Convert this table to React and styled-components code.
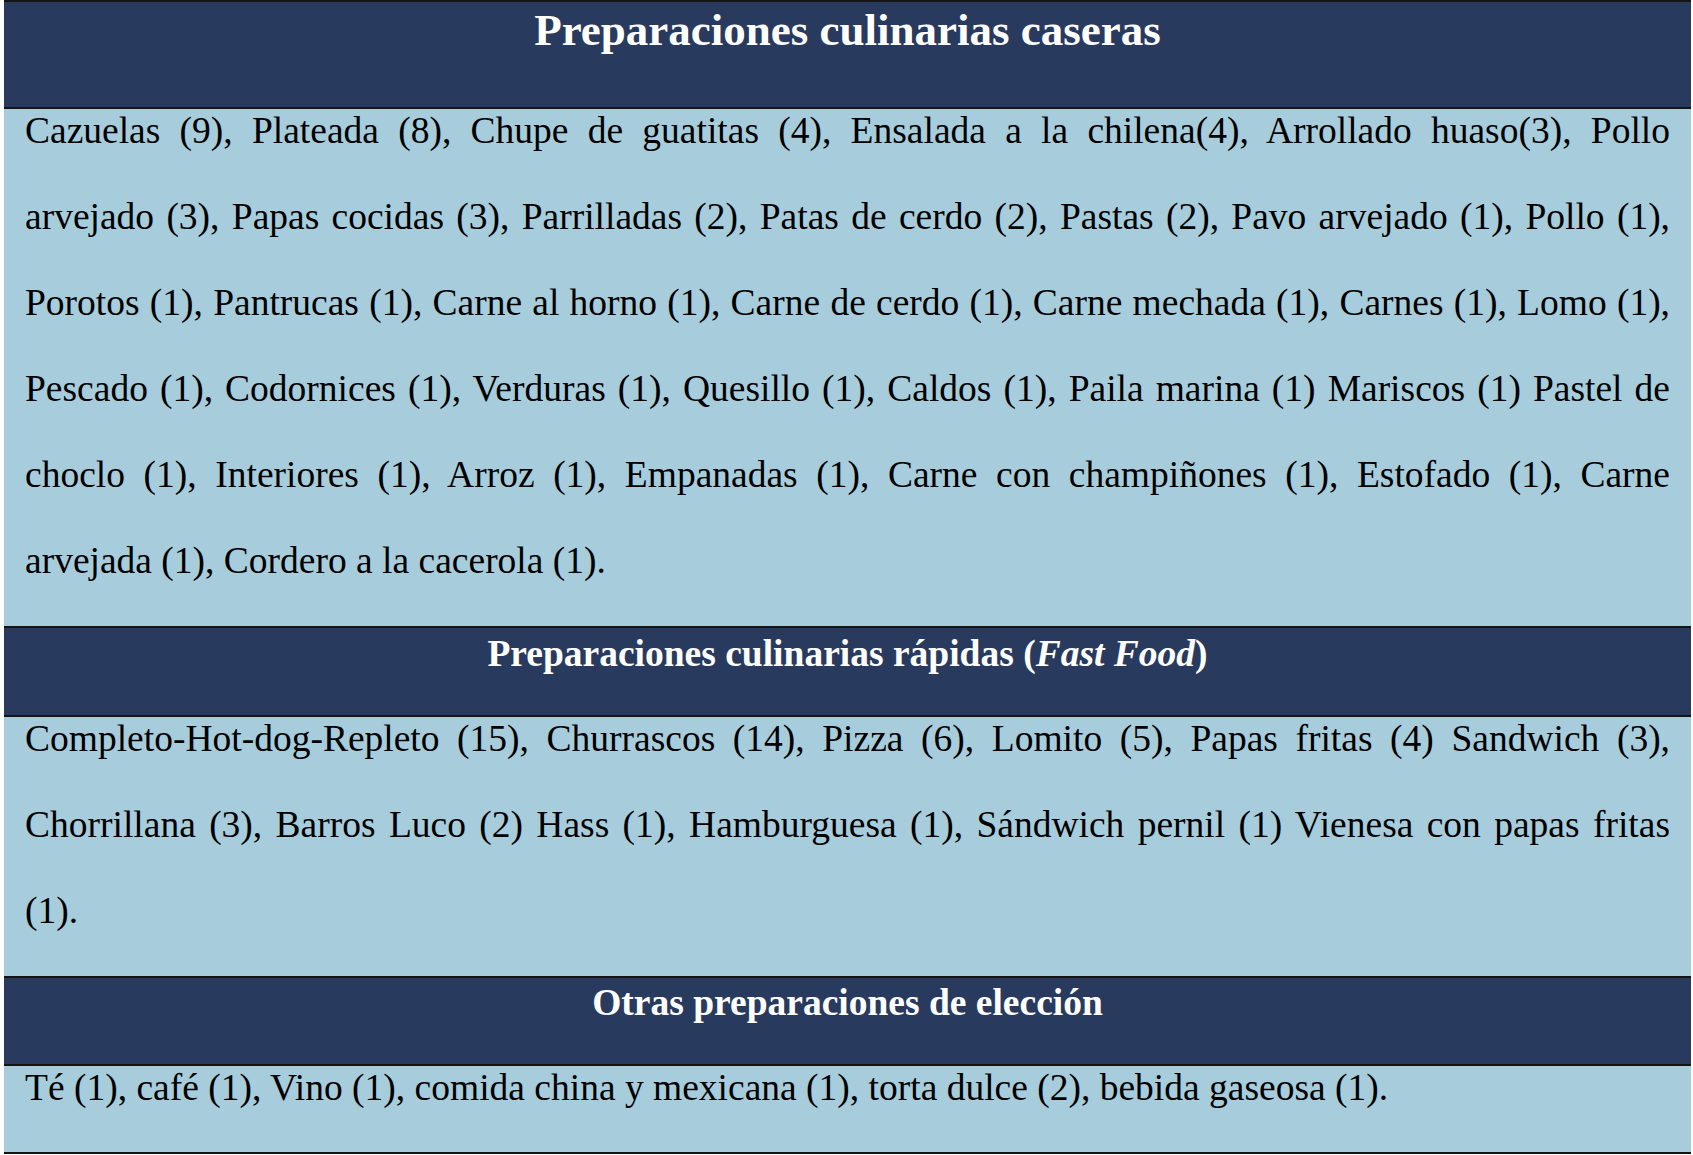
import React from "react";
import styled, { createGlobalStyle } from "styled-components";

const GlobalStyle = createGlobalStyle`
  html, body {
    margin: 0;
    padding: 0;
    background: #ffffff;
  }
  body {
    font-family: "Liberation Serif", "Times New Roman", serif;
  }
`;

const Table = styled.div`
  margin-left: 4px;
  width: 1687px;
  border-top: 2px solid #151515;
  display: flex;
  flex-direction: column;
`;

const Head = styled.div`
  background: #283a5e;
  color: #ffffff;
  border-bottom: 2px solid #141414;
  height: ${(p) => p.$height}px;
  box-sizing: content-box;
  text-align: center;
`;

const Title = styled.h2`
  margin: 0;
  font-weight: bold;
  font-size: ${(p) => p.$size}px;
  line-height: ${(p) => p.$line}px;
  em {
    font-style: italic;
  }
`;

const Body = styled.div`
  background: #a7cddc;
  border-bottom: 2px solid #141414;
  padding: 0 21px ${(p) => p.$pad}px;
`;

const Text = styled.p`
  margin: -21px 0 0;
  font-size: 37.5px;
  line-height: 86px;
  color: #000000;
  text-align: justify;
`;

const sections = [
  {
    title: "Preparaciones culinarias caseras",
    size: 45,
    line: 56,
    height: 105,
    pad: 22,
    text:
      "Cazuelas (9), Plateada (8), Chupe de guatitas (4), Ensalada a la chilena(4), Arrollado huaso(3), Pollo arvejado (3), Papas cocidas (3), Parrilladas (2), Patas de cerdo (2), Pastas (2), Pavo arvejado (1), Pollo (1), Porotos (1), Pantrucas (1), Carne al horno (1), Carne de cerdo (1), Carne mechada (1), Carnes (1), Lomo (1), Pescado (1), Codornices (1), Verduras (1), Quesillo (1), Caldos (1), Paila marina (1) Mariscos (1) Pastel de choclo (1), Interiores (1), Arroz (1), Empanadas (1), Carne con champiñones (1), Estofado (1), Carne arvejada (1), Cordero a la cacerola (1).",
  },
  {
    title: (
      <>
        Preparaciones culinarias rápidas (<em>Fast Food</em>)
      </>
    ),
    size: 37.5,
    line: 51,
    height: 87,
    pad: 22,
    text:
      "Completo-Hot-dog-Repleto (15), Churrascos (14), Pizza (6), Lomito (5), Papas fritas (4) Sandwich (3), Chorrillana (3), Barros Luco (2) Hass (1), Hamburguesa (1), Sándwich pernil (1) Vienesa con papas fritas (1).",
  },
  {
    title: "Otras preparaciones de elección",
    size: 37.5,
    line: 49,
    height: 86,
    pad: 21,
    text:
      "Té (1), café (1), Vino (1), comida china y mexicana (1), torta dulce (2), bebida gaseosa (1).",
  },
];

export default function App() {
  return (
    <>
      <GlobalStyle />
      <Table>
        {sections.map((s, i) => (
          <React.Fragment key={i}>
            <Head $height={s.height}>
              <Title $size={s.size} $line={s.line}>
                {s.title}
              </Title>
            </Head>
            <Body $pad={s.pad}>
              <Text>{s.text}</Text>
            </Body>
          </React.Fragment>
        ))}
      </Table>
    </>
  );
}
